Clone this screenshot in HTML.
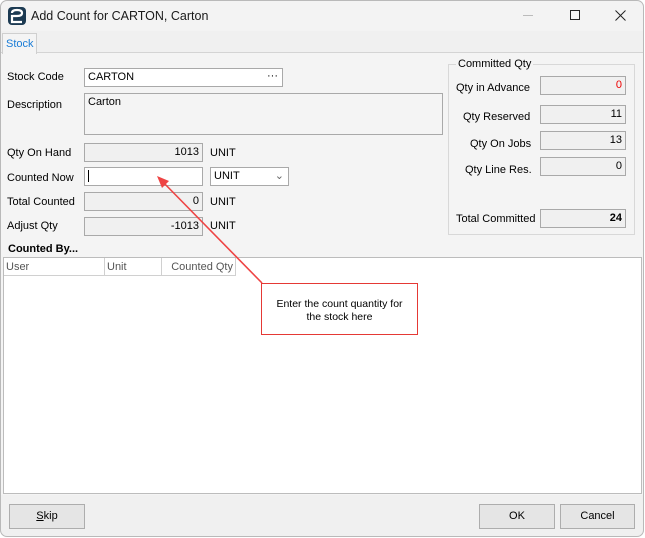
<!DOCTYPE html>
<html><head><style>
*{box-sizing:border-box;margin:0;padding:0}
body{width:645px;height:538px;overflow:hidden;background:#fff;font-family:"Liberation Sans",sans-serif;font-size:11px;color:#000;position:relative}
.a{position:absolute}
.win{left:0;top:0;width:644px;height:537px;background:#f4f4f4;border-radius:7px;overflow:hidden}
.inp{position:absolute;border:1px solid #a9a9a9;background:#f0f0f0;height:19px;padding:2px 3px;text-align:right}
.w{background:#fff;text-align:left}
.lbl{position:absolute}
.btn{position:absolute;border:1px solid #adadad;background:#e5e5e5;height:25px;text-align:center;line-height:23px;font-size:11px}
</style></head><body>
<div class="a win">
 <div class="a" style="left:0;top:0;width:644px;height:31px;background:#f3f3f3"></div>
 <svg class="a" style="left:8px;top:7px" width="18" height="18" viewBox="0 0 18 18"><rect x="0" y="0" width="18" height="18" rx="4" fill="#1c3a52"/><path d="M4 6 Q4 3 9 3 Q14 3 14 6 Q14 9 9 9 L4 9 L4 15 L14 15" stroke="#fff" stroke-width="2.2" fill="none"/></svg>
 <div class="a" style="left:31px;top:9px;font-size:12.5px;color:#1a1a1a">Add Count for CARTON, Carton</div>
 <div class="a" style="left:523px;top:15px;width:10px;height:1px;background:#bbb"></div>
 <div class="a" style="left:570px;top:10px;width:10px;height:10px;border:1px solid #222"></div>
 <svg class="a" style="left:615px;top:10px" width="11" height="11"><path d="M0.5 0.5L10.5 10.5M10.5 0.5L0.5 10.5" stroke="#222" stroke-width="1"/></svg>
 <div class="a" style="left:0;top:31px;width:644px;height:22px;background:#f0f0f0;border-bottom:1px solid #d4d4d4"></div>
 <div class="a" style="left:2px;top:33px;width:35px;height:21px;background:#f4f4f4;border:1px solid #cfcfcf;border-bottom:none;color:#1a7cd6;padding:4px 0 0 3px">Stock</div>

 <div class="lbl" style="left:7px;top:71px">Stock Code</div>
 <div class="inp w" style="left:84px;top:68px;width:199px">CARTON<span class="a" style="right:4px;top:1px">···</span></div>
 <div class="lbl" style="left:7px;top:99px">Description</div>
 <div class="inp w" style="left:84px;top:93px;width:359px;height:42px;background:#f4f4f4">Carton</div>

 <div class="lbl" style="left:7px;top:147px">Qty On Hand</div>
 <div class="inp" style="left:84px;top:143px;width:119px">1013</div>
 <div class="lbl" style="left:210px;top:147px">UNIT</div>
 <div class="lbl" style="left:7px;top:172px">Counted Now</div>
 <div class="inp w" style="left:84px;top:167px;width:119px"><span style="display:inline-block;width:1px;height:12px;background:#000"></span></div>
 <div class="inp w" style="left:210px;top:167px;width:79px">UNIT<span class="a" style="right:4px;top:1px;color:#666">⌄</span></div>
 <div class="lbl" style="left:7px;top:196px">Total Counted</div>
 <div class="inp" style="left:84px;top:192px;width:119px">0</div>
 <div class="lbl" style="left:210px;top:196px">UNIT</div>
 <div class="lbl" style="left:7px;top:220px">Adjust Qty</div>
 <div class="inp" style="left:84px;top:217px;width:119px">-1013</div>
 <div class="lbl" style="left:210px;top:220px">UNIT</div>

 <div class="a" style="left:448px;top:64px;width:187px;height:171px;border:1px solid #d8d8d8"></div>
 <div class="a" style="left:456px;top:58px;background:#f4f4f4;padding:0 2px">Committed Qty</div>
 <div class="lbl" style="left:456px;top:82px">Qty in Advance</div>
 <div class="inp" style="left:540px;top:76px;width:86px;color:#e00">0</div>
 <div class="lbl" style="left:463px;top:111px">Qty Reserved</div>
 <div class="inp" style="left:540px;top:105px;width:86px">11</div>
 <div class="lbl" style="left:470px;top:138px">Qty On Jobs</div>
 <div class="inp" style="left:540px;top:131px;width:86px">13</div>
 <div class="lbl" style="left:465px;top:164px">Qty Line Res.</div>
 <div class="inp" style="left:540px;top:157px;width:86px">0</div>
 <div class="lbl" style="left:456px;top:213px">Total Committed</div>
 <div class="inp" style="left:540px;top:209px;width:86px;font-weight:bold">24</div>

 <div class="lbl" style="left:8px;top:243px;font-weight:bold">Counted By...</div>
 <div class="a" style="left:3px;top:257px;width:639px;height:237px;background:#fff;border:1px solid #bcbcbc"></div>
 <div class="a" style="left:4px;top:258px;width:101px;height:18px;border-right:1px solid #d0d0d0;border-bottom:1px solid #d0d0d0;color:#555;padding:3px 2px">User</div>
 <div class="a" style="left:105px;top:258px;width:57px;height:18px;border-right:1px solid #d0d0d0;border-bottom:1px solid #d0d0d0;color:#555;padding:3px 2px">Unit</div>
 <div class="a" style="left:162px;top:258px;width:74px;height:18px;border-right:1px solid #d0d0d0;border-bottom:1px solid #d0d0d0;color:#555;padding:3px 2px;text-align:right">Counted Qty</div>

 <svg class="a" style="left:0;top:0" width="645" height="538"><path d="M262 283 L159 178" stroke="#ee4444" stroke-width="1.6"/><path d="M157 176 L169 181 L162 188 Z" fill="#ee4444"/></svg>
 <div class="a" style="left:261px;top:283px;width:157px;height:52px;background:#fff;border:1.5px solid #e53935;text-align:center;padding-top:14px;line-height:13px;font-size:10.5px">Enter the count quantity for<br>the stock here</div>

 <div class="a" style="left:0;top:495px;width:644px;height:43px;background:#f0f0f0"></div>
 <div class="btn" style="left:9px;top:504px;width:76px"><u>S</u>kip</div>
 <div class="btn" style="left:479px;top:504px;width:76px">OK</div>
 <div class="btn" style="left:560px;top:504px;width:75px">Cancel</div>
</div>
<div class="a" style="left:0;top:0;width:644px;height:537px;border:1px solid #b9b9b9;border-radius:7px;pointer-events:none"></div>
</body></html>
